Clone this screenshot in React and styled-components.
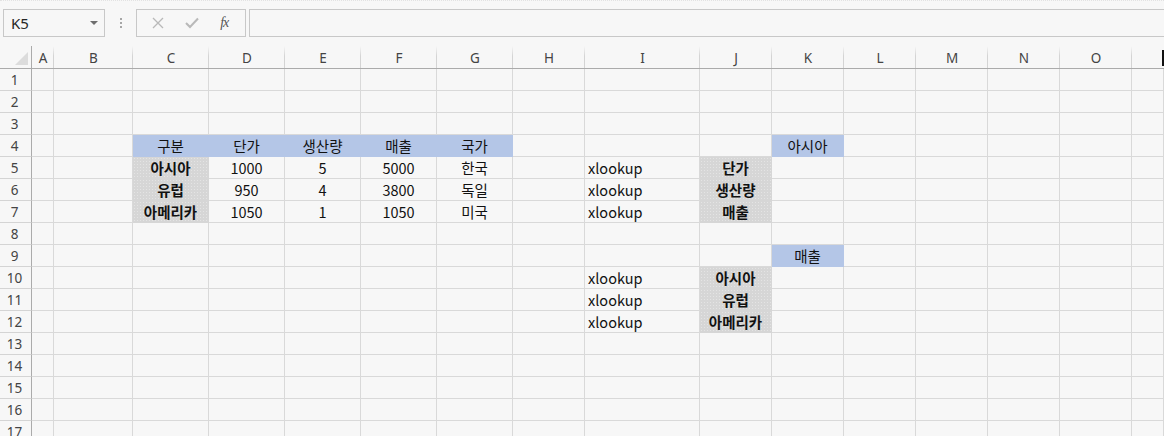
import React from "react";
import styled, { createGlobalStyle, css } from "styled-components";

const GlobalStyle = createGlobalStyle`
  html, body {
    margin: 0;
    padding: 0;
    background: #f7f7f7;
    overflow: hidden;
  }
  * {
    box-sizing: border-box;
  }
`;

const COLS = [
  { name: "A", w: 22 },
  { name: "B", w: 79 },
  { name: "C", w: 76 },
  { name: "D", w: 76 },
  { name: "E", w: 76 },
  { name: "F", w: 76 },
  { name: "G", w: 76 },
  { name: "H", w: 72 },
  { name: "I", w: 115 },
  { name: "J", w: 72 },
  { name: "K", w: 72 },
  { name: "L", w: 72 },
  { name: "M", w: 72 },
  { name: "N", w: 72 },
  { name: "O", w: 72 },
  { name: "", w: 32 },
];

const ROW_COUNT = 17;

// cell contents, keyed by address
const blue = (v) => ({ v, fill: "blue", align: "center" });
const gray = (v) => ({ v, fill: "gray", align: "center", bold: true });
const mid = (v) => ({ v, align: "center" });
const left = (v) => ({ v, align: "left" });

const CELLS = {
  C4: blue("구분"),
  D4: blue("단가"),
  E4: blue("생산량"),
  F4: blue("매출"),
  G4: blue("국가"),
  C5: gray("아시아"),
  C6: gray("유럽"),
  C7: gray("아메리카"),
  D5: mid("1000"),
  D6: mid("950"),
  D7: mid("1050"),
  E5: mid("5"),
  E6: mid("4"),
  E7: mid("1"),
  F5: mid("5000"),
  F6: mid("3800"),
  F7: mid("1050"),
  G5: mid("한국"),
  G6: mid("독일"),
  G7: mid("미국"),
  K4: blue("아시아"),
  I5: left("xlookup"),
  I6: left("xlookup"),
  I7: left("xlookup"),
  J5: gray("단가"),
  J6: gray("생산량"),
  J7: gray("매출"),
  K9: blue("매출"),
  I10: left("xlookup"),
  I11: left("xlookup"),
  I12: left("xlookup"),
  J10: gray("아시아"),
  J11: gray("유럽"),
  J12: gray("아메리카"),
};

const FILLS = {
  blue: "#b4c6e7",
  gray: "#d6d6d6",
};

const Page = styled.div`
  width: 1164px;
  height: 436px;
  overflow: hidden;
  display: flex;
  flex-direction: column;
  background: #f7f7f7;
  font-family: "Noto Sans", "Noto Sans CJK KR", sans-serif;
`;

const FormulaBar = styled.div`
  height: 46px;
  flex: none;
  display: flex;
  align-items: flex-start;
  padding: 9px 0 0 3px;
  border-top: 1px dotted #e2e2e2;
`;

const NameBox = styled.div`
  width: 102px;
  height: 28px;
  border: 1px solid #c8c8c8;
  display: flex;
  align-items: center;
  justify-content: space-between;
  padding: 0 6px 0 7px;
  font-size: 15px;
  color: #262626;
  margin-top: -1px;
`;

const DropArrow = styled.span`
  width: 0;
  height: 0;
  border-left: 4px solid transparent;
  border-right: 4px solid transparent;
  border-top: 4px solid #6e6e6e;
`;

const Grip = styled.div`
  width: 31px;
  height: 28px;
  display: flex;
  flex-direction: column;
  align-items: center;
  justify-content: center;
  gap: 2px;
  margin-top: -1px;

  span {
    width: 2px;
    height: 2px;
    background: #a6a6a6;
  }
`;

const FxButtons = styled.div`
  width: 110px;
  height: 28px;
  border: 1px solid #c8c8c8;
  display: flex;
  align-items: center;
  justify-content: space-around;
  padding: 0 4px;
  margin-top: -1px;
`;

const FxLabel = styled.span`
  font-family: "Liberation Serif", serif;
  font-style: italic;
  font-size: 14px;
  color: #555;
  letter-spacing: -1px;
  padding-right: 2px;
`;

const FormulaInput = styled.div`
  flex: 1;
  height: 28px;
  margin-left: 3px;
  margin-right: -4px;
  border: 1px solid #c8c8c8;
  margin-top: -1px;
`;

const Sheet = styled.div`
  display: grid;
  grid-template-columns: 32px ${COLS.map((c) => `${c.w}px`).join(" ")};
  grid-template-rows: 23px repeat(${ROW_COUNT}, 22px);
`;

const Corner = styled.div`
  position: relative;
  border-right: 1px solid #ababab;
  border-bottom: 1px solid #ababab;

  &::after {
    content: "";
    position: absolute;
    right: 3px;
    bottom: 3px;
    width: 13px;
    height: 13px;
    background: #dcdcdc;
    clip-path: polygon(100% 0, 100% 100%, 0 100%);
  }
`;

const ColHead = styled.div`
  position: relative;
  border-bottom: 1px solid #ababab;
  display: flex;
  align-items: center;
  justify-content: center;
  font-size: 13.5px;
  color: #444;
  padding-top: 1px;

  &::after {
    content: "";
    position: absolute;
    right: 0;
    top: 0;
    bottom: 0;
    width: 1px;
    background: linear-gradient(to bottom, #f7f7f7, #d4d4d4 45%);
  }
`;

const LastHead = styled.div`
  position: relative;
  border-bottom: 1px solid #ababab;
`;

const Cursor = styled.span`
  position: absolute;
  right: 0;
  top: 4px;
  width: 2px;
  height: 16px;
  background: #111;
`;

const RowHead = styled.div`
  border-right: 1px solid #ababab;
  border-bottom: 1px solid #d4d4d4;
  display: flex;
  align-items: center;
  justify-content: center;
  font-size: 13.5px;
  color: #444;
  padding-right: 2px;
`;

const Cell = styled.div`
  border-right: 1px solid #d9d9d9;
  border-bottom: 1px solid #d9d9d9;
  display: flex;
  align-items: center;
  justify-content: ${(p) => (p.$align === "left" ? "flex-start" : "center")};
  padding: 0 3px 1px 3px;
  font-family: "Noto Sans CJK KR", "Noto Sans", sans-serif;
  font-size: 14.5px;
  font-weight: ${(p) => (p.$bold ? 700 : 400)};
  color: #111;
  white-space: nowrap;
  overflow: hidden;

  ${(p) =>
    p.$fill &&
    css`
      background-color: ${FILLS[p.$fill]};
      border-color: ${FILLS[p.$fill]};
    `}

  ${(p) =>
    p.$fill === "gray" &&
    css`
      background-image: radial-gradient(
        circle,
        rgba(255, 255, 255, 0.35) 0.6px,
        transparent 0.7px
      );
      background-size: 3px 3px;
    `}
`;

const CloseIcon = () => (
  <svg width="12" height="12" viewBox="0 0 12 12">
    <path d="M1 1 L11 11 M11 1 L1 11" stroke="#b9b9b9" strokeWidth="1.3" fill="none" />
  </svg>
);

const CheckIcon = () => (
  <svg width="14" height="12" viewBox="0 0 14 12">
    <path d="M1 6 L5 10 L13 1.5" stroke="#b9b9b9" strokeWidth="2" fill="none" />
  </svg>
);

const App = () => {
  const rows = Array.from({ length: ROW_COUNT }, (_, i) => i + 1);
  return (
    <Page>
      <GlobalStyle />
      <FormulaBar>
        <NameBox>
          K5
          <DropArrow />
        </NameBox>
        <Grip>
          <span />
          <span />
          <span />
        </Grip>
        <FxButtons>
          <CloseIcon />
          <CheckIcon />
          <FxLabel>fx</FxLabel>
        </FxButtons>
        <FormulaInput />
      </FormulaBar>

      <Sheet>
        <Corner />
        {COLS.map((c, i) =>
          c.name ? (
            <ColHead key={c.name}>{c.name}</ColHead>
          ) : (
            <LastHead key={`h${i}`}>
              <Cursor />
            </LastHead>
          )
        )}
        {rows.map((r) => (
          <React.Fragment key={r}>
            <RowHead>{r}</RowHead>
            {COLS.map((c, i) => {
              const cell = CELLS[`${c.name}${r}`];
              return (
                <Cell
                  key={`${r}-${i}`}
                  $fill={cell?.fill}
                  $bold={cell?.bold}
                  $align={cell?.align}
                >
                  {cell?.v}
                </Cell>
              );
            })}
          </React.Fragment>
        ))}
      </Sheet>
    </Page>
  );
};

export default App;
